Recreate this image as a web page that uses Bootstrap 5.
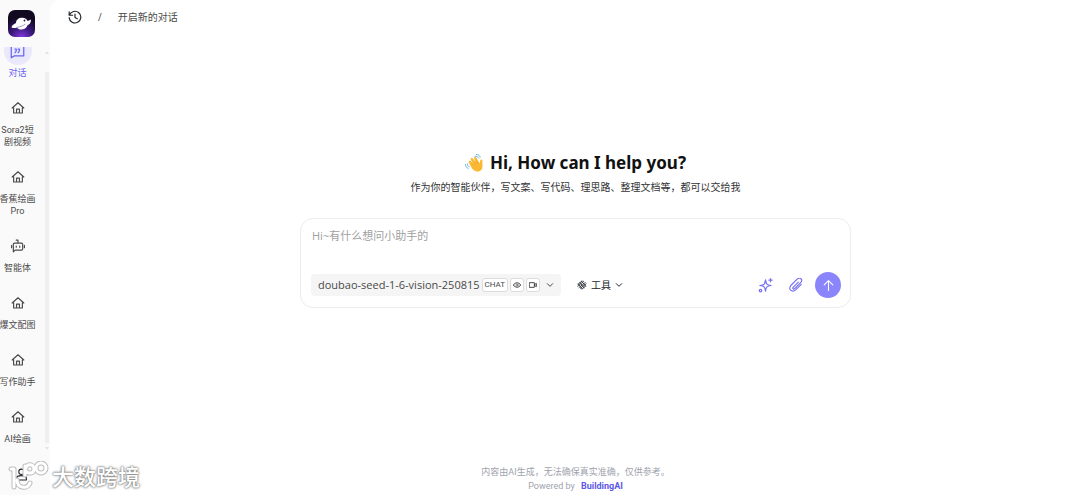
<!DOCTYPE html>
<html lang="zh-CN">
<head>
<meta charset="utf-8">
<meta name="viewport" content="width=device-width, initial-scale=1">
<title>BuildingAI</title>
<link href="https://cdn.jsdelivr.net/npm/bootstrap@5.3.0/dist/css/bootstrap.min.css" rel="stylesheet">
<style>
  body { background: #fafafa; color: #4a4a4a; font-family: "Open Sans", "Noto Sans CJK SC", sans-serif; font-size: 10px; line-height: 16px; }
  button { color: inherit; }
  svg { display: block; flex: none; }
  .line-icon { fill: none; stroke: currentColor; stroke-width: 2; stroke-linecap: round; stroke-linejoin: round; }
  .side { width: 50px; }
  .side-logo { margin: 10px 0 10px 8px; }
  .side-scroll { min-height: 0; overflow: hidden; }
  .side-list { width: 35px; gap: 15px; margin-top: -10px; }
  .side-link { color: #4a4a4a; font-family: Roboto, "Noto Sans CJK SC", sans-serif; font-size: 9px; line-height: 12px; white-space: nowrap; gap: 2px; }
  .side-link.active { color: #6a65f0; }
  .side-icon { width: 28px; height: 28px; }
  .active .side-icon { background: #e9e9fb; }
  .side-bar { width: 6px; color: #e4e4e4; }
  .side-thumb { width: 4px; background: #efefef; margin: 18px 0 0; }
  .side-foot { height: 45px; padding: 18px 0 0 15px; color: #777; }
  .page-main { background: #fff; border-top-left-radius: 10px; min-width: 0; }
  .top-line { height: 34px; padding-left: 18px; gap: 16px; }
  .shifted { padding-left: 21px; }
  .hello { padding-bottom: 40px; }
  .hello h1 { font-family: "Noto Sans", sans-serif; font-size: 17px; line-height: 24px; font-weight: 700; color: #111; gap: 7px; }
  .hello p { line-height: 18px; color: #333; margin: 3px 0 22px; }
  .ask { width: 100%; max-width: 551px; border: 1px solid #ececec; border-radius: 13px; padding: 9px 9px 9px 10px; }
  .ask textarea { height: 44px; resize: none; outline: 0; font-size: 11px; line-height: 16px; padding: 0 1px; color: #444; }
  .ask textarea::placeholder { color: #a0a0a0; }
  .model { height: 22px; background: #f5f5f5; border-radius: 4px; font-size: 11px; padding: 0 7px; gap: 2px; }
  .chip { height: 14px; border: 1px solid #dcdcdc; border-radius: 3px; background: #fff; font-family: Roboto, sans-serif; font-size: 8px; line-height: 12px; padding: 0 2px; }
  .tools { font-size: 10px; line-height: 16px; gap: 4px; }
  .purple { color: #7672f2; }
  .send { width: 26px; height: 26px; background: #8a85fb; color: #fff; }
  .note { font-family: Roboto, "Noto Sans CJK SC", sans-serif; font-size: 9px; line-height: 14px; color: #a0a3ad; padding-bottom: 2px; }
  .note a { color: #5d58e8; }
  .stamp { position: absolute; left: 8px; bottom: 4px; gap: 3px; color: #fff; font-size: 22px; line-height: 30px; font-weight: 500; text-shadow: 0 0 2px #777, 0 0 3px #888, 0 0 1px #aaa; pointer-events: none; }
</style>
</head>
<body>
<svg class="d-none" aria-hidden="true">
  <symbol id="home" viewBox="0 0 24 24"><path d="M2 12 12 3l10 9M4.500 10v10.500h15V10M9.500 20v-6h5v6"/></symbol>
  <symbol id="down" viewBox="0 0 24 24"><path stroke-width="3" d="m4 8 8 8 8-8"/></symbol>
</svg>
<div class="d-flex vh-100 position-relative">
  <aside class="side d-flex flex-column flex-shrink-0">
    <a class="side-logo" href="#" aria-label="首页">
      <svg width="27" height="27" viewBox="0 0 27 27">
        <defs><radialGradient id="glow" cx=".5" cy="1.050" r=".8"><stop offset="0" stop-color="#8a3be8"/><stop offset=".5" stop-color="#3d1a80"/><stop offset="1" stop-color="#11091f"/></radialGradient></defs>
        <rect width="27" height="27" rx="7" fill="url(#glow)"/>
        <path d="M8 13c0-3.500 3-5.500 6.500-5.300 2.500.1 4.500 1.600 5 3.300.8 0 2-.9 3.500-1.500-.1 3.500-1.500 5-3.300 5.500-1.200 3.500-4.500 5-7.500 4.500-1.500-.2-2.600-1-3.200-2-2 .8-4 .8-5.500-.3.300-1.500 2-2.700 4.500-4.200Z" fill="#fff"/>
        <path d="M9 17.300c3-.3 6-1.500 8.500-3.300" fill="none" stroke="#8a6cc0" stroke-width=".7"/>
        <circle cx="16.500" cy="10.500" r=".9" fill="#24104c"/>
      </svg>
    </a>
    <div class="side-scroll d-flex flex-grow-1 justify-content-between">
      <nav>
        <ul class="side-list list-unstyled d-flex flex-column mb-0">
          <li><a class="side-link active d-flex flex-column align-items-center text-center text-decoration-none" href="#"><span class="side-icon rounded-circle d-flex align-items-center justify-content-center"><svg class="line-icon" width="15" height="15" viewBox="0 0 24 24"><path d="M2 3h20v16H7l-5 3ZM10 8v3l-2 3M15 8v3l-2 3M8 8h2M13 8h2"/></svg></span><span>对话</span></a></li>
          <li><a class="side-link d-flex flex-column align-items-center text-center text-decoration-none" href="#"><span class="side-icon d-flex align-items-center justify-content-center"><svg class="line-icon" width="14" height="14"><use href="#home"/></svg></span><span>Sora2短<br>剧视频</span></a></li>
          <li><a class="side-link d-flex flex-column align-items-center text-center text-decoration-none" href="#"><span class="side-icon d-flex align-items-center justify-content-center"><svg class="line-icon" width="14" height="14"><use href="#home"/></svg></span><span>香蕉绘画<br>Pro</span></a></li>
          <li><a class="side-link d-flex flex-column align-items-center text-center text-decoration-none" href="#"><span class="side-icon d-flex align-items-center justify-content-center"><svg class="line-icon" width="14" height="14" viewBox="0 0 24 24"><path d="M4 22V9c0-1 1-2 2-2h12c1 0 2 1 2 2v8c0 1-1 2-2 2H7ZM12 7V2H9M1 11v4M23 11v4M9 12v2M15 12v2"/></svg></span><span>智能体</span></a></li>
          <li><a class="side-link d-flex flex-column align-items-center text-center text-decoration-none" href="#"><span class="side-icon d-flex align-items-center justify-content-center"><svg class="line-icon" width="14" height="14"><use href="#home"/></svg></span><span>爆文配图</span></a></li>
          <li><a class="side-link d-flex flex-column align-items-center text-center text-decoration-none" href="#"><span class="side-icon d-flex align-items-center justify-content-center"><svg class="line-icon" width="14" height="14"><use href="#home"/></svg></span><span>写作助手</span></a></li>
          <li><a class="side-link d-flex flex-column align-items-center text-center text-decoration-none" href="#"><span class="side-icon d-flex align-items-center justify-content-center"><svg class="line-icon" width="14" height="14"><use href="#home"/></svg></span><span>AI绘画</span></a></li>
        </ul>
      </nav>
      <div class="side-bar d-flex flex-column align-items-center pt-1" aria-hidden="true">
        <svg width="4" height="3" viewBox="0 0 4 3"><path d="M0 3 2 0l2 3Z" fill="currentColor"/></svg>
        <div class="side-thumb flex-grow-1"></div>
        <svg class="mt-1" width="4" height="3" viewBox="0 0 4 3"><path d="m0 0 2 3 2-3Z" fill="currentColor"/></svg>
      </div>
    </div>
    <div class="side-foot"><button class="btn d-block p-0 border-0" aria-label="账户"><svg class="line-icon" width="13" height="13" viewBox="0 0 24 24"><circle cx="12" cy="7" r="5"/><path d="M3 22v-3c0-3 3-5 9-5s9 2 9 5v3Z"/></svg></button></div>
  </aside>

  <main class="page-main flex-grow-1 d-flex flex-column">
    <header class="top-line d-flex align-items-center">
      <button class="btn p-0 border-0" aria-label="历史记录"><svg class="line-icon" width="14" height="14" viewBox="0 0 24 24"><path d="M2 3v6h6M2.500 9A10 10 0 1 1 2 13M12 7v6l4 2"/></svg></button>
      <span>/</span>
      <span>开启新的对话</span>
    </header>

    <section class="hello shifted flex-grow-1 d-flex flex-column align-items-center justify-content-center">
      <h1 class="d-flex align-items-center mb-0">
        <svg width="18" height="18" viewBox="0 0 38 38" role="img" aria-label="挥手">
          <path d="M11 23 8 18c-1-3 2-5 4-3l6 6-6-9c-1-4 3-5 5-2l6 8-4-9c0-3 4-4 5-1l7 12 1-6c1-4 5-3 5 0-1 6 1 12-1 17-4 9-18 9-25-8Z" fill="#fbb832"/>
          <path d="m16 18 5 6M20 15l5 7M24 13l5 8" stroke="#ee9a22" stroke-width="1" fill="none"/>
          <path d="M21 5c4-1 6 1 8 4M24 1c5 0 7 2 8 6M1 22c0 4 2 7 6 9M5 21c0 3 1 5 4 6" stroke="#6fb2da" stroke-width="2" fill="none" stroke-linecap="round"/>
        </svg>
        <span>Hi, How can I help you?</span>
      </h1>
      <p>作为你的智能伙伴，写文案、写代码、理思路、整理文档等，都可以交给我</p>
      <form class="ask">
        <textarea class="d-block w-100 border-0 bg-transparent" aria-label="输入消息" placeholder="Hi~有什么想问小助手的"></textarea>
        <div class="d-flex align-items-center">
          <button type="button" class="model border-0 d-flex align-items-center">
            <span>doubao-seed-1-6-vision-250815</span>
            <span class="chip">CHAT</span>
            <span class="chip d-flex align-items-center"><svg class="line-icon" width="8" height="8" viewBox="0 0 24 24"><path stroke-width="3" d="M1 12c5-9 17-9 22 0-5 9-17 9-22 0Z"/><circle cx="12" cy="12" r="3"/></svg></span>
            <span class="chip d-flex align-items-center"><svg class="line-icon" width="8" height="8" viewBox="0 0 24 24"><path stroke-width="3" d="M2 5h14v14H2ZM16 11l6-4v10l-6-4"/></svg></span>
            <svg class="line-icon ms-1" width="8" height="8"><use href="#down"/></svg>
          </button>
          <button type="button" class="tools btn border-0 p-0 ms-3 d-flex align-items-center">
            <svg class="line-icon" width="10" height="10" viewBox="0 0 24 24"><path d="M2 11 12 2M2 15 16 3M5 18 20 6M8 20l14-11M12 22l9-8M7 6l10 13M11 3l10 12M3 9l9 12"/></svg>
            <span>工具</span>
            <svg class="line-icon" width="8" height="8"><use href="#down"/></svg>
          </button>
          <div class="ms-auto d-flex align-items-center">
            <button type="button" class="btn border-0 p-0 purple me-3" aria-label="优化提示词"><svg class="line-icon" width="15" height="15" viewBox="0 0 24 24"><path d="M12 3c1 7 2 8 9 9-7 1-8 2-9 9-1-7-2-8-9-9 7-1 8-2 9-9ZM20 1v5M17.500 3.500h5"/><circle cx="4" cy="20" r="2"/></svg></button>
            <button type="button" class="btn border-0 p-0 purple me-1" aria-label="添加附件"><svg class="line-icon" width="14" height="14" viewBox="0 0 24 24"><path d="m16 7-9 9c-2 2 1 4 3 2l10-10c5-5-1-10-6-6L4 12c-7 7 1 14 8 8l9-9"/></svg></button>
            <button type="button" class="send btn border-0 p-0 rounded-circle d-flex align-items-center justify-content-center ms-2" aria-label="发送"><svg class="line-icon" width="13" height="13" viewBox="0 0 24 24"><path d="M12 21V4M4 11l8-8 8 8"/></svg></button>
          </div>
        </div>
      </form>
    </section>

    <footer class="note shifted text-center">
      <div>内容由AI生成，无法确保真实准确，仅供参考。</div>
      <div>Powered by <a class="fw-bold text-decoration-none ms-1" href="#">BuildingAI</a></div>
    </footer>
  </main>

  <div class="stamp d-flex align-items-center">
    <svg width="41" height="30" viewBox="0 0 41 30" fill="none" stroke-linecap="round" stroke-linejoin="round">
      <g stroke="#bdbdbd" stroke-width="5"><path d="M3 8h3v18M22 22c-3 7-13 5-13-3M17 14V5M18 7c1-5 8-4 8 1s-6 5-8 2"/><circle cx="33" cy="7" r="5"/></g>
      <g stroke="#fff" stroke-width="3"><path d="M3 8h3v18M22 22c-3 7-13 5-13-3M17 14V5M18 7c1-5 8-4 8 1s-6 5-8 2"/><circle cx="33" cy="7" r="5"/></g>
    </svg>
    <span>大数跨境</span>
  </div>
</div>
<script src="https://cdn.jsdelivr.net/npm/bootstrap@5.3.0/dist/js/bootstrap.bundle.min.js"></script>
</body>
</html>
